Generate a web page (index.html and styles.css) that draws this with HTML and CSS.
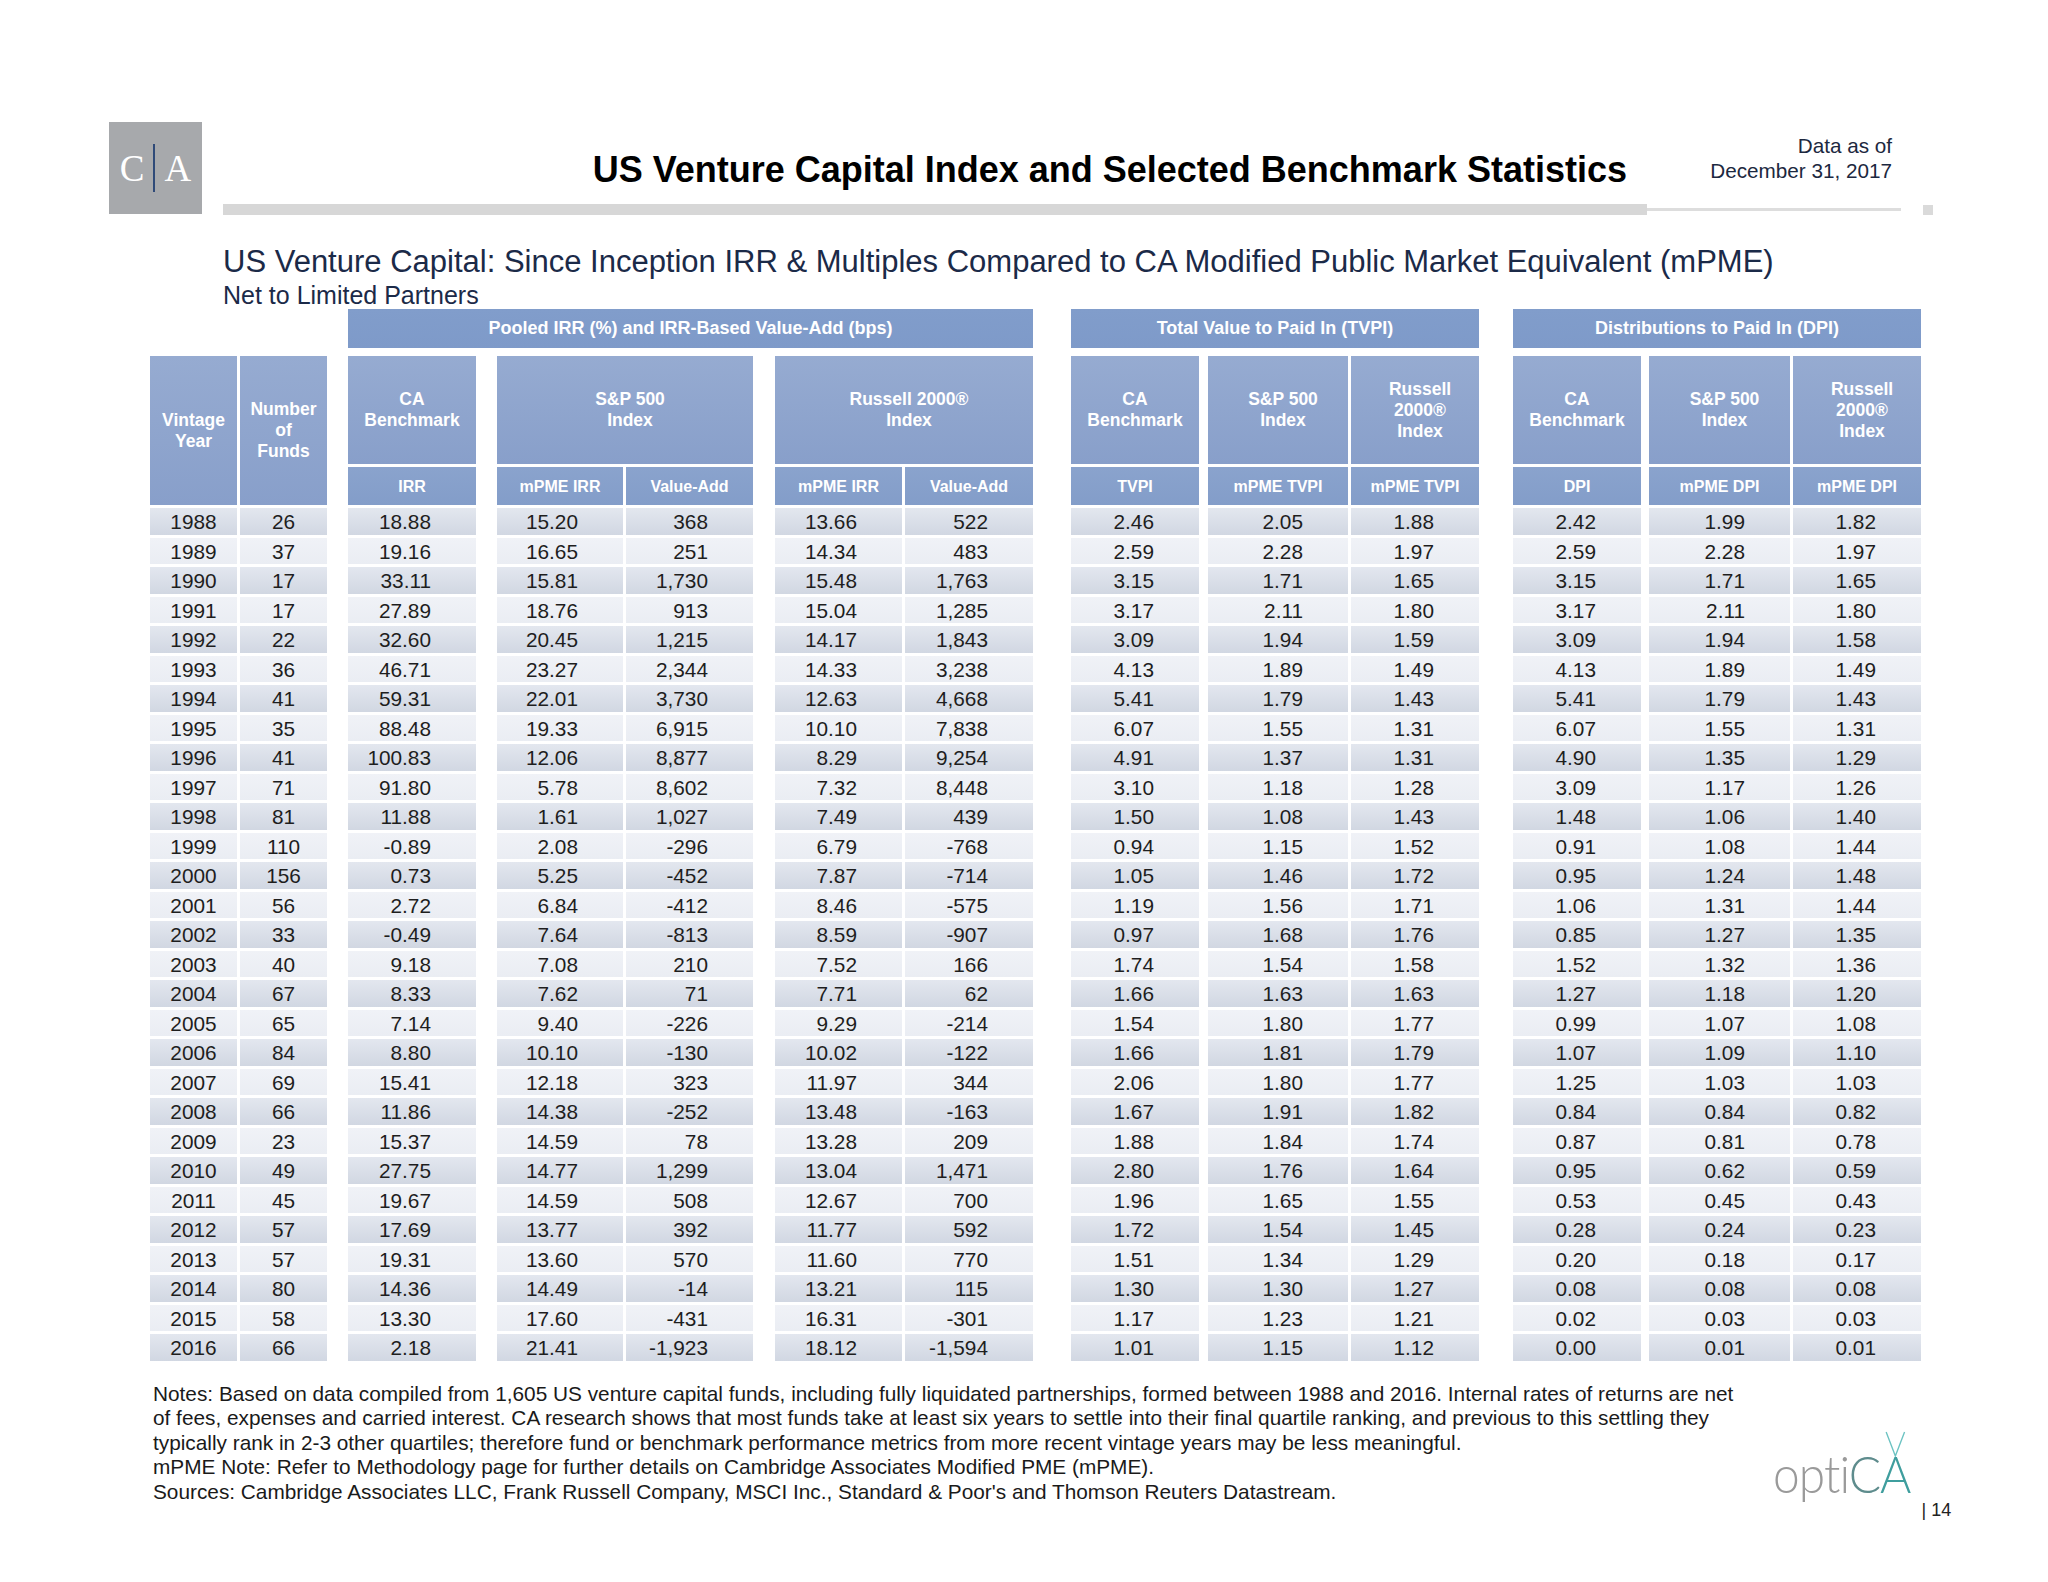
FILE: index.html
```html
<!DOCTYPE html>
<html lang="en">
<head>
<meta charset="utf-8">
<title>US Venture Capital Index and Selected Benchmark Statistics</title>
<link rel="stylesheet" href="styles.css">
</head>
<body>
<div class="page">
  <header class="top">
    <div class="ca-logo"><span>C</span><span class="bar"></span><span>A</span></div>
    <div class="head-main">
      <div class="title-row">
        <h1 class="title">US Venture Capital Index and Selected Benchmark Statistics</h1>
        <div class="asof">Data as of<br>December 31, 2017</div>
      </div>
      <div class="rule"><span class="thick"></span><span class="thin"></span><span class="sq"></span></div>
    </div>
  </header>

  <section class="sub">
    <h2 class="subtitle">US Venture Capital: Since Inception IRR &amp; Multiples Compared to CA Modified Public Market Equivalent (mPME)</h2>
    <div class="net">Net to Limited Partners</div>
  </section>

  <section class="table">
    <div class="grid head">
      <div class="hc gh g-irr">Pooled IRR (%) and IRR-Based Value-Add (bps)</div>
      <div class="hc gh g-tvpi">Total Value to Paid In (TVPI)</div>
      <div class="hc gh g-dpi">Distributions to Paid In (DPI)</div>

      <div class="hc tall c1">Vintage<br>Year</div>
      <div class="hc tall c2">Number<br>of<br>Funds</div>
      <div class="hc h3 c3">CA<br>Benchmark</div>
      <div class="hc h3 off c4s">S&amp;P 500<br>Index</div>
      <div class="hc h3 off c6s">Russell 2000®<br>Index</div>
      <div class="hc h3 c8">CA<br>Benchmark</div>
      <div class="hc h3 off c9">S&amp;P 500<br>Index</div>
      <div class="hc h3 off c10">Russell<br>2000®<br>Index</div>
      <div class="hc h3 c11">CA<br>Benchmark</div>
      <div class="hc h3 off c12">S&amp;P 500<br>Index</div>
      <div class="hc h3 off c13">Russell<br>2000®<br>Index</div>

      <div class="hc sh c3">IRR</div>
      <div class="hc sh c4">mPME IRR</div>
      <div class="hc sh c5">Value-Add</div>
      <div class="hc sh c6">mPME IRR</div>
      <div class="hc sh c7">Value-Add</div>
      <div class="hc sh c8">TVPI</div>
      <div class="hc sh c9">mPME TVPI</div>
      <div class="hc sh c10">mPME TVPI</div>
      <div class="hc sh c11">DPI</div>
      <div class="hc sh c12">mPME DPI</div>
      <div class="hc sh c13">mPME DPI</div>
    </div>

    <div class="grid body">
      <div class="r"><span>1988</span><span>26</span><span>18.88</span><span>15.20</span><span>368</span><span>13.66</span><span>522</span><span>2.46</span><span>2.05</span><span>1.88</span><span>2.42</span><span>1.99</span><span>1.82</span></div>
      <div class="r"><span>1989</span><span>37</span><span>19.16</span><span>16.65</span><span>251</span><span>14.34</span><span>483</span><span>2.59</span><span>2.28</span><span>1.97</span><span>2.59</span><span>2.28</span><span>1.97</span></div>
      <div class="r"><span>1990</span><span>17</span><span>33.11</span><span>15.81</span><span>1,730</span><span>15.48</span><span>1,763</span><span>3.15</span><span>1.71</span><span>1.65</span><span>3.15</span><span>1.71</span><span>1.65</span></div>
      <div class="r"><span>1991</span><span>17</span><span>27.89</span><span>18.76</span><span>913</span><span>15.04</span><span>1,285</span><span>3.17</span><span>2.11</span><span>1.80</span><span>3.17</span><span>2.11</span><span>1.80</span></div>
      <div class="r"><span>1992</span><span>22</span><span>32.60</span><span>20.45</span><span>1,215</span><span>14.17</span><span>1,843</span><span>3.09</span><span>1.94</span><span>1.59</span><span>3.09</span><span>1.94</span><span>1.58</span></div>
      <div class="r"><span>1993</span><span>36</span><span>46.71</span><span>23.27</span><span>2,344</span><span>14.33</span><span>3,238</span><span>4.13</span><span>1.89</span><span>1.49</span><span>4.13</span><span>1.89</span><span>1.49</span></div>
      <div class="r"><span>1994</span><span>41</span><span>59.31</span><span>22.01</span><span>3,730</span><span>12.63</span><span>4,668</span><span>5.41</span><span>1.79</span><span>1.43</span><span>5.41</span><span>1.79</span><span>1.43</span></div>
      <div class="r"><span>1995</span><span>35</span><span>88.48</span><span>19.33</span><span>6,915</span><span>10.10</span><span>7,838</span><span>6.07</span><span>1.55</span><span>1.31</span><span>6.07</span><span>1.55</span><span>1.31</span></div>
      <div class="r"><span>1996</span><span>41</span><span>100.83</span><span>12.06</span><span>8,877</span><span>8.29</span><span>9,254</span><span>4.91</span><span>1.37</span><span>1.31</span><span>4.90</span><span>1.35</span><span>1.29</span></div>
      <div class="r"><span>1997</span><span>71</span><span>91.80</span><span>5.78</span><span>8,602</span><span>7.32</span><span>8,448</span><span>3.10</span><span>1.18</span><span>1.28</span><span>3.09</span><span>1.17</span><span>1.26</span></div>
      <div class="r"><span>1998</span><span>81</span><span>11.88</span><span>1.61</span><span>1,027</span><span>7.49</span><span>439</span><span>1.50</span><span>1.08</span><span>1.43</span><span>1.48</span><span>1.06</span><span>1.40</span></div>
      <div class="r"><span>1999</span><span>110</span><span>-0.89</span><span>2.08</span><span>-296</span><span>6.79</span><span>-768</span><span>0.94</span><span>1.15</span><span>1.52</span><span>0.91</span><span>1.08</span><span>1.44</span></div>
      <div class="r"><span>2000</span><span>156</span><span>0.73</span><span>5.25</span><span>-452</span><span>7.87</span><span>-714</span><span>1.05</span><span>1.46</span><span>1.72</span><span>0.95</span><span>1.24</span><span>1.48</span></div>
      <div class="r"><span>2001</span><span>56</span><span>2.72</span><span>6.84</span><span>-412</span><span>8.46</span><span>-575</span><span>1.19</span><span>1.56</span><span>1.71</span><span>1.06</span><span>1.31</span><span>1.44</span></div>
      <div class="r"><span>2002</span><span>33</span><span>-0.49</span><span>7.64</span><span>-813</span><span>8.59</span><span>-907</span><span>0.97</span><span>1.68</span><span>1.76</span><span>0.85</span><span>1.27</span><span>1.35</span></div>
      <div class="r"><span>2003</span><span>40</span><span>9.18</span><span>7.08</span><span>210</span><span>7.52</span><span>166</span><span>1.74</span><span>1.54</span><span>1.58</span><span>1.52</span><span>1.32</span><span>1.36</span></div>
      <div class="r"><span>2004</span><span>67</span><span>8.33</span><span>7.62</span><span>71</span><span>7.71</span><span>62</span><span>1.66</span><span>1.63</span><span>1.63</span><span>1.27</span><span>1.18</span><span>1.20</span></div>
      <div class="r"><span>2005</span><span>65</span><span>7.14</span><span>9.40</span><span>-226</span><span>9.29</span><span>-214</span><span>1.54</span><span>1.80</span><span>1.77</span><span>0.99</span><span>1.07</span><span>1.08</span></div>
      <div class="r"><span>2006</span><span>84</span><span>8.80</span><span>10.10</span><span>-130</span><span>10.02</span><span>-122</span><span>1.66</span><span>1.81</span><span>1.79</span><span>1.07</span><span>1.09</span><span>1.10</span></div>
      <div class="r"><span>2007</span><span>69</span><span>15.41</span><span>12.18</span><span>323</span><span>11.97</span><span>344</span><span>2.06</span><span>1.80</span><span>1.77</span><span>1.25</span><span>1.03</span><span>1.03</span></div>
      <div class="r"><span>2008</span><span>66</span><span>11.86</span><span>14.38</span><span>-252</span><span>13.48</span><span>-163</span><span>1.67</span><span>1.91</span><span>1.82</span><span>0.84</span><span>0.84</span><span>0.82</span></div>
      <div class="r"><span>2009</span><span>23</span><span>15.37</span><span>14.59</span><span>78</span><span>13.28</span><span>209</span><span>1.88</span><span>1.84</span><span>1.74</span><span>0.87</span><span>0.81</span><span>0.78</span></div>
      <div class="r"><span>2010</span><span>49</span><span>27.75</span><span>14.77</span><span>1,299</span><span>13.04</span><span>1,471</span><span>2.80</span><span>1.76</span><span>1.64</span><span>0.95</span><span>0.62</span><span>0.59</span></div>
      <div class="r"><span>2011</span><span>45</span><span>19.67</span><span>14.59</span><span>508</span><span>12.67</span><span>700</span><span>1.96</span><span>1.65</span><span>1.55</span><span>0.53</span><span>0.45</span><span>0.43</span></div>
      <div class="r"><span>2012</span><span>57</span><span>17.69</span><span>13.77</span><span>392</span><span>11.77</span><span>592</span><span>1.72</span><span>1.54</span><span>1.45</span><span>0.28</span><span>0.24</span><span>0.23</span></div>
      <div class="r"><span>2013</span><span>57</span><span>19.31</span><span>13.60</span><span>570</span><span>11.60</span><span>770</span><span>1.51</span><span>1.34</span><span>1.29</span><span>0.20</span><span>0.18</span><span>0.17</span></div>
      <div class="r"><span>2014</span><span>80</span><span>14.36</span><span>14.49</span><span>-14</span><span>13.21</span><span>115</span><span>1.30</span><span>1.30</span><span>1.27</span><span>0.08</span><span>0.08</span><span>0.08</span></div>
      <div class="r"><span>2015</span><span>58</span><span>13.30</span><span>17.60</span><span>-431</span><span>16.31</span><span>-301</span><span>1.17</span><span>1.23</span><span>1.21</span><span>0.02</span><span>0.03</span><span>0.03</span></div>
      <div class="r"><span>2016</span><span>66</span><span>2.18</span><span>21.41</span><span>-1,923</span><span>18.12</span><span>-1,594</span><span>1.01</span><span>1.15</span><span>1.12</span><span>0.00</span><span>0.01</span><span>0.01</span></div>
    </div>
  </section>

  <footer class="foot">
    <div class="notes">
      <p>Notes: Based on data compiled from 1,605 US venture capital funds, including fully liquidated partnerships, formed between 1988 and 2016. Internal rates of returns are net<br>of fees, expenses and carried interest. CA research shows that most funds take at least six years to settle into their final quartile ranking, and previous to this settling they<br>typically rank in 2-3 other quartiles; therefore fund or benchmark performance metrics from more recent vintage years may be less meaningful.</p>
      <p>mPME Note: Refer to Methodology page for further details on Cambridge Associates Modified PME (mPME).</p>
      <p>Sources: Cambridge Associates LLC, Frank Russell Company, MSCI Inc., Standard &amp; Poor's and Thomson Reuters Datastream.</p>
    </div>
    <div class="brand">
      <div class="optica"><span class="o-grey">opti</span><span class="o-c">C</span><span class="o-a">A</span><svg class="vmark" viewBox="0 0 24 26" width="24" height="26"><path d="M2 1 L12 25 L22 1" fill="none" stroke="#6cc3c2" stroke-width="1.5"/></svg></div>
      <span class="pg">| 14</span>
    </div>
  </footer>
</div>
</body>
</html>
```

FILE: styles.css
```css
html, body {
  margin: 0;
  padding: 0;
  background: #ffffff;
}

body {
  font-family: "Liberation Sans", Arial, sans-serif;
  color: #1a1a1a;
}

.page {
  width: 2048px;
  height: 1582px;
  box-sizing: border-box;
  padding-top: 122px;
  overflow: hidden;
}

/* ---------- header ---------- */
.top {
  display: flex;
  align-items: flex-start;
  padding-left: 109px;
}

.ca-logo {
  width: 93px;
  height: 92px;
  background: #a7a9ac;
  display: flex;
  align-items: center;
  justify-content: center;
  gap: 9px;
  font-family: "Liberation Serif", "Times New Roman", serif;
  font-size: 37px;
  line-height: 1;
  color: #ffffff;
}

.ca-logo .bar {
  width: 2px;
  height: 48px;
  background: #2f4a78;
}

.head-main {
  margin-left: 21px;
  width: 1710px;
}

.title-row {
  display: grid;
  grid-template-columns: 1fr 265px;
  align-items: start;
  height: 82px;
  padding-right: 41px;
}

.title {
  margin: 28px 0 0;
  text-align: right;
  font-size: 36px;
  line-height: 40px;
  font-weight: bold;
  color: #000000;
}

.asof {
  margin-top: 11px;
  text-align: right;
  font-size: 20.7px;
  line-height: 25px;
  color: #1c2840;
}

.rule {
  display: flex;
  align-items: center;
  height: 11px;
}

.rule .thick {
  width: 1424px;
  height: 11px;
  background: #d7d7d7;
}

.rule .thin {
  width: 254px;
  height: 3px;
  background: #dddddd;
}

.rule .sq {
  width: 10px;
  height: 10px;
  margin-left: 22px;
  background: #dadada;
}

/* ---------- subtitle ---------- */
.sub {
  margin-top: 28px;
  padding-left: 223px;
  color: #1b2a48;
}

.subtitle {
  margin: 0;
  font-size: 31px;
  line-height: 38px;
  font-weight: normal;
}

.net {
  padding-top: 1px;
  font-size: 25px;
  line-height: 27px;
}

/* ---------- table ---------- */
.table {
  padding-left: 150px;
}

.grid {
  display: grid;
  grid-template-columns: 87px 87px 146px 144px 127px 146px 128px 163px 146px 128px 159px 146px 128px;
  column-gap: 3px;
}

.head {
  grid-template-rows: 39px 2px 108px 38px;
  row-gap: 3px;
}

.hc {
  display: flex;
  align-items: center;
  justify-content: center;
  text-align: center;
  color: #ffffff;
  font-weight: bold;
  font-size: 17.5px;
  line-height: 21px;
  background: linear-gradient(#96abd1, #889fca);
}

.hc.off {
  padding-left: 10px;
}

.gh {
  grid-row: 1;
  font-size: 18px;
  background: linear-gradient(#819dcb, #7e9ac9);
}

.g-irr { grid-column: 3 / 8; margin-left: 18px; }
.g-tvpi { grid-column: 8 / 11; margin-left: 35px; }
.g-dpi { grid-column: 11 / 14; margin-left: 31px; }

.tall { grid-row: 3 / 5; }
.h3 { grid-row: 3; }
.sh {
  grid-row: 4;
  font-size: 16px;
  background: linear-gradient(#8aa3cd, #839dc9);
}

.c1 { grid-column: 1; }
.c2 { grid-column: 2; }
.c3 { grid-column: 3; margin-left: 18px; }
.c4 { grid-column: 4; margin-left: 18px; }
.c4s { grid-column: 4 / 6; margin-left: 18px; }
.c5 { grid-column: 5; }
.c6 { grid-column: 6; margin-left: 19px; }
.c6s { grid-column: 6 / 8; margin-left: 19px; }
.c7 { grid-column: 7; }
.c8 { grid-column: 8; margin-left: 35px; }
.c9 { grid-column: 9; margin-left: 6px; }
.c10 { grid-column: 10; }
.c11 { grid-column: 11; margin-left: 31px; }
.c12 { grid-column: 12; margin-left: 5px; }
.c13 { grid-column: 13; }

.body {
  margin-top: 3px;
  grid-auto-rows: 26.5px;
  row-gap: 3px;
}

.r {
  display: contents;
}

.r > span {
  font-size: 20.8px;
  line-height: 27px;
  text-align: right;
  padding-right: 45px;
  color: #1e1e1e;
}

.r > span:nth-child(1),
.r > span:nth-child(2) {
  text-align: center;
  padding-right: 0;
}

.r > span:nth-child(3),
.r > span:nth-child(4) { margin-left: 18px; }
.r > span:nth-child(6) { margin-left: 19px; }
.r > span:nth-child(8) { margin-left: 35px; }
.r > span:nth-child(9) { margin-left: 6px; }
.r > span:nth-child(11) { margin-left: 31px; }
.r > span:nth-child(12) { margin-left: 5px; }

.r:nth-child(odd) > span {
  background: linear-gradient(#e3e7ef, #d1d7e2);
}

.r:nth-child(even) > span {
  background: linear-gradient(#f0f2f7, #eaedf3);
}

/* ---------- footer ---------- */
.foot {
  display: flex;
  align-items: flex-start;
  margin-top: 21px;
  padding-left: 153px;
}

.notes {
  width: 1610px;
  font-size: 20.8px;
  line-height: 24.5px;
  color: #1a1a1a;
  white-space: nowrap;
}

.notes p {
  margin: 0;
}

.brand {
  display: flex;
  align-items: flex-end;
  margin-left: 10px;
  margin-top: 63px;
}

.optica {
  position: relative;
  margin-right: -12px;
  font-family: Lato, "Open Sans", sans-serif;
  font-weight: 300;
  font-size: 52px;
  line-height: 56px;
  letter-spacing: -1px;
  transform: scaleX(0.92);
  transform-origin: left center;
}

.o-grey { color: #9a9a9a; }
.o-c { color: #5e8c8d; }
.o-a { color: #3f9e9e; }

.vmark {
  position: absolute;
  right: 4px;
  top: -14px;
}

.pg {
  margin-left: 11px;
  margin-bottom: -19px;
  font-size: 18px;
  line-height: 20px;
  color: #222222;
}
```
